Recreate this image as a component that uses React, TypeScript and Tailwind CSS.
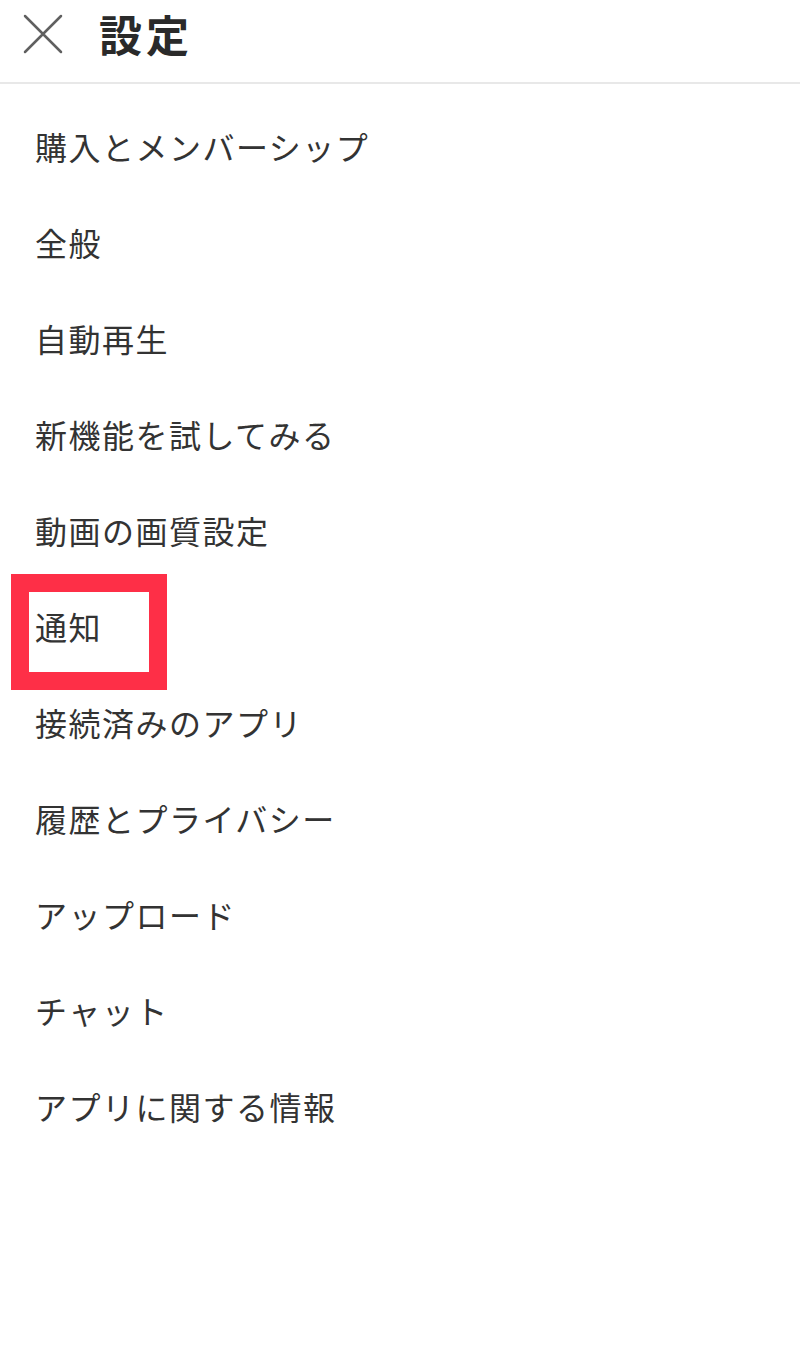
const items = [
  '購入とメンバーシップ',
  '全般',
  '自動再生',
  '新機能を試してみる',
  '動画の画質設定',
  '通知',
  '接続済みのアプリ',
  '履歴とプライバシー',
  'アップロード',
  'チャット',
  'アプリに関する情報',
];

export default function App() {
  return (
    <div
      className="w-[800px] h-[1368px] bg-white text-[#333333] overflow-hidden"
      style={{ fontFamily: '"Hiragino Sans", "Noto Sans CJK JP", sans-serif' }}
    >
      {/* header */}
      <div className="h-[84px] flex items-center border-b-2 border-[#e8e8e8]">
        <svg width="40" height="40" viewBox="0 0 40 40" className="ml-[23px] mb-[14px]">
          <path d="M2 2 L38 38 M38 2 L2 38" stroke="#606060" strokeWidth="2.5" strokeLinecap="round" fill="none" />
        </svg>
        <h1 className="ml-[36px] mb-[16px] text-[43px] font-bold leading-none text-[#2a2a2a] tracking-[4px]">設定</h1>
      </div>

      {/* list */}
      <div className="relative pt-[14px]">
        {items.map((label) => (
          <div key={label} className="h-[96px] flex items-center pl-[35px] text-[32px] leading-none tracking-[1.5px]">
            {label}
          </div>
        ))}
        {/* highlight annotation */}
        <div className="absolute left-[11px] top-[490px] w-[156px] h-[116px] border-[18px] border-[#fe2f47]" />
      </div>
    </div>
  );
}
